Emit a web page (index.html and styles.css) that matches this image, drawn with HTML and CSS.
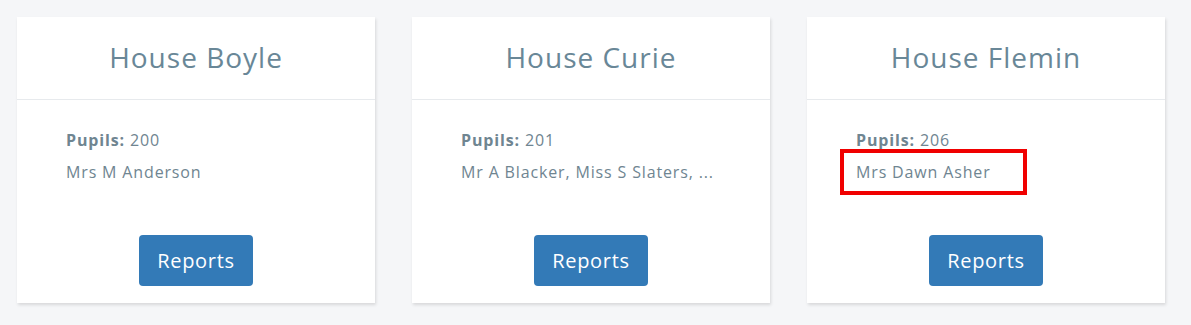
FILE: index.html
```html
<!DOCTYPE html>
<html lang="en">
<head>
    <meta charset="UTF-8">
    <meta name="viewport" content="width=device-width, initial-scale=1.0">
    <title>Houses</title>
    <link rel="stylesheet" href="styles.css">
</head>
<body>

<div class="houses">
    <div class="house">
        <div class="house-title">House Boyle</div>
        <div class="house-body">
            <div class="pupils"><b>Pupils:</b> 200</div>
            <div class="tutors">Mrs M Anderson</div>
            <button class="button">Reports</button>
        </div>
    </div>

    <div class="house">
        <div class="house-title">House Curie</div>
        <div class="house-body">
            <div class="pupils"><b>Pupils:</b> 201</div>
            <div class="tutors">Mr A Blacker, Miss S Slaters, ...</div>
            <button class="button">Reports</button>
        </div>
    </div>

    <div class="house">
        <div class="house-title">House Flemin</div>
        <div class="house-body">
            <div class="pupils"><b>Pupils:</b> 206</div>
            <div class="tutors"><span class="highlight">Mrs Dawn Asher</span></div>
            <button class="button">Reports</button>
        </div>
    </div>
</div>

</body>
</html>
```

FILE: styles.css
```css
body {
    font-family: "Open Sans", Arial, sans-serif;
    margin: 0;
    padding: 0;
    background-color: #f5f6f8;
    color: #6f8591;
}
.houses {
    display: flex;
    gap: 37px;
    padding: 17px;
}
.house {
    width: 358px;
    height: 286px;
    background: white;
    box-shadow: 1px 2px 3px rgba(0, 0, 0, 0.12);
    display: flex;
    flex-direction: column;
}
.house-title {
    height: 82px;
    line-height: 80px;
    text-align: center;
    font-size: 28px;
    letter-spacing: 1px;
    color: #698797;
    border-bottom: 1px solid #e7eaed;
}
.house-body {
    flex: 1;
    display: flex;
    flex-direction: column;
    padding: 29px 49px 17px;
}
.pupils,
.tutors {
    font-size: 16px;
    line-height: 22px;
    letter-spacing: 0.85px;
    white-space: nowrap;
}
.pupils b {
    font-weight: 700;
}
.tutors {
    margin-top: 10px;
}
.highlight {
    position: relative;
}
/* red annotation box */
.highlight::after {
    content: "";
    position: absolute;
    left: -16px;
    top: -12px;
    width: 179px;
    height: 38px;
    border: 4px solid #f00000;
}
.button {
    margin: auto auto 0;
    width: 114px;
    height: 51px;
    border: none;
    border-radius: 4px;
    background-color: #337ab7;
    color: white;
    font-family: inherit;
    font-size: 20px;
    letter-spacing: 0.7px;
    cursor: pointer;
}
.button:hover {
    background-color: #286090;
}
```
